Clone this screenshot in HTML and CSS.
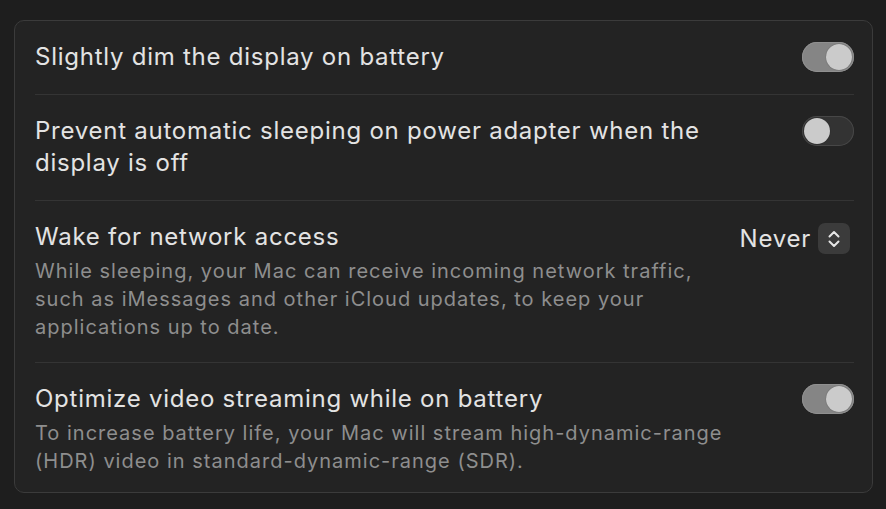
FILE: index.html
```html
<!DOCTYPE html>
<html lang="en">
<head>
    <meta charset="UTF-8">
    <meta name="viewport" content="width=device-width, initial-scale=1.0">
    <title>Battery Options</title>
    <link rel="stylesheet" href="styles.css">
</head>
<body>

    <div class="settings-card">
        <div class="setting-row">
            <div class="setting-text">
                <div class="setting-title">Slightly dim the display on battery</div>
            </div>
            <span class="toggle on"><span class="toggle-knob"></span></span>
        </div>

        <div class="setting-row top">
            <div class="setting-text">
                <div class="setting-title">Prevent automatic sleeping on power adapter when the display is off</div>
            </div>
            <span class="toggle"><span class="toggle-knob"></span></span>
        </div>

        <div class="setting-row top">
            <div class="setting-text">
                <div class="setting-title">Wake for network access</div>
                <div class="setting-desc">While sleeping, your Mac can receive incoming network traffic, such as iMessages and other iCloud updates, to keep your applications up to date.</div>
            </div>
            <div class="popup">
                <span class="popup-value">Never</span>
                <span class="popup-stepper">
                    <svg width="16" height="22" viewBox="0 0 16 22">
                        <path d="M3.5 8.5 L8 4 L12.5 8.5" fill="none" stroke="#e6e6e6" stroke-width="2" stroke-linecap="round" stroke-linejoin="round"/>
                        <path d="M3.5 13.5 L8 18 L12.5 13.5" fill="none" stroke="#e6e6e6" stroke-width="2" stroke-linecap="round" stroke-linejoin="round"/>
                    </svg>
                </span>
            </div>
        </div>

        <div class="setting-row top last">
            <div class="setting-text">
                <div class="setting-title">Optimize video streaming while on battery</div>
                <div class="setting-desc">To increase battery life, your Mac will stream high-dynamic-range (HDR) video in standard-dynamic-range (SDR).</div>
            </div>
            <span class="toggle on"><span class="toggle-knob"></span></span>
        </div>
    </div>

</body>
</html>
```

FILE: styles.css
```css
html, body {
    background: #1e1e1e;
}

body {
    font-family: Inter, "Noto Sans", sans-serif;
    margin: 20px 13px 0 14px;
    -webkit-font-smoothing: antialiased;
}

.settings-card {
    background: #232323;
    border: 1px solid #3b3b3b;
    border-radius: 10px;
    padding: 0 18px 0 20px;
    box-sizing: border-box;
    height: 473px;
}

.setting-row {
    display: flex;
    align-items: center;
    justify-content: space-between;
    padding: 20px 0 21px;
    border-bottom: 1px solid #343434;
}

.setting-row.top {
    align-items: flex-start;
}

.setting-row.last {
    border-bottom: none;
}

.setting-text {
    max-width: 695px;
}

.setting-title {
    color: #e3e3e3;
    font-size: 24px;
    line-height: 32px;
    letter-spacing: 0.75px;
}

.setting-desc {
    color: #8e8e8e;
    font-size: 20px;
    line-height: 28px;
    letter-spacing: 1px;
    margin-top: 4px;
}

.toggle {
    position: relative;
    display: inline-block;
    width: 52px;
    height: 30px;
    border-radius: 15px;
    background: #333333;
    box-shadow: inset 0 0 0 1px #474747;
    flex-shrink: 0;
}

.toggle.on {
    background: #858585;
    box-shadow: inset 0 0 0 1px #909090;
}

.toggle-knob {
    position: absolute;
    top: 2px;
    left: 2px;
    width: 26px;
    height: 26px;
    border-radius: 50%;
    background: #cbcbcb;
    box-shadow: 0 0 1px rgba(0, 0, 0, 0.5);
}

.toggle.on .toggle-knob {
    left: 24px;
}

.setting-row.top .toggle {
    margin-top: 1px;
}

.popup {
    display: flex;
    align-items: center;
    gap: 7px;
    margin-top: 2px;
    margin-right: 4px;
}

.popup-value {
    color: #e3e3e3;
    font-size: 24px;
    line-height: 28px;
    letter-spacing: 0.75px;
}

.popup-stepper {
    display: flex;
    align-items: center;
    justify-content: center;
    width: 32px;
    height: 31px;
    border-radius: 7px;
    background: #3b3b3b;
}
```
